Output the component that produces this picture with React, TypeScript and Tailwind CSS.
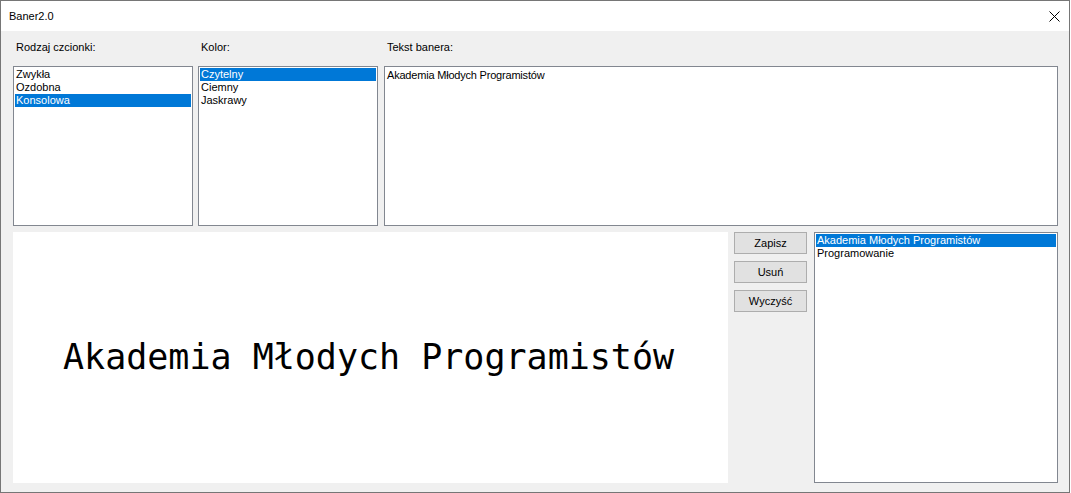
const fontTypes = ['Zwykła', 'Ozdobna', 'Konsolowa'];
const colors = ['Czytelny', 'Ciemny', 'Jaskrawy'];
const saved = ['Akademia Młodych Programistów', 'Programowanie'];

function ListBox({ items, selected, className }: { items: string[]; selected: number; className: string }) {
  return (
    <div className={`bg-white border border-[#828790] p-px ${className}`}>
      {items.map((item, i) => (
        <div
          key={item}
          className={`h-[13px] leading-[13px] pl-px whitespace-nowrap ${
            i === selected ? 'bg-[#0078d7] text-white' : 'text-black'
          }`}
        >
          {item}
        </div>
      ))}
    </div>
  );
}

function WinButton({ label }: { label: string }) {
  return (
    <button className="w-[73px] h-[22px] bg-[#e1e1e1] border border-[#adadad] text-black text-[11px] leading-[13px]">
      {label}
    </button>
  );
}

export default function App() {
  return (
    <div className="w-[1071px] h-[493px] bg-white" style={{ fontFamily: '"Liberation Sans", Arial, sans-serif' }}>
      <div className="w-[1070px] h-[493px] border border-[#767676] flex flex-col">
        {/* title bar */}
        <div className="h-[30px] bg-white flex items-center justify-between pl-[8px] pr-[9px]">
          <span className="text-[11px] text-black">Baner2.0</span>
          <svg width="11" height="11" viewBox="0 0 11 11" className="mt-px">
            <path d="M0.5 0.5 L10.5 10.5 M10.5 0.5 L0.5 10.5" stroke="#000" strokeWidth="1" />
          </svg>
        </div>

        {/* body */}
        <div className="flex-1 bg-[#f0f0f0] pl-[12px] pr-[11px] pt-[10px] text-[11px] leading-[13px] text-black">
          <div className="flex h-[13px]">
            <div className="w-[180px] pl-[3px]">Rodzaj czcionki:</div>
            <div className="w-[180px] ml-[5px] pl-[3px]">Kolor:</div>
            <div className="ml-[6px] pl-[3px]">Tekst banera:</div>
          </div>

          <div className="flex mt-[12px] h-[160px]">
            <ListBox items={fontTypes} selected={2} className="w-[180px] h-full" />
            <ListBox items={colors} selected={0} className="w-[180px] h-full ml-[5px]" />
            <div className="w-[674px] h-full ml-[6px] bg-white border border-[#828790] pl-[2px] pt-[2px] tracking-[-0.2px]">
              Akademia Młodych Programistów
            </div>
          </div>

          <div className="flex mt-[6px] h-[251px]">
            <div className="w-[715px] h-full bg-white flex items-center pl-[50px]">
              <span
                className="text-[35px] leading-none text-black whitespace-nowrap"
                style={{ fontFamily: '"DejaVu Sans Mono", "Liberation Mono", monospace' }}
              >
                Akademia Młodych Programistów
              </span>
            </div>
            <div className="ml-[6px] flex flex-col gap-[7px]">
              <WinButton label="Zapisz" />
              <WinButton label="Usuń" />
              <WinButton label="Wyczyść" />
            </div>
            <ListBox items={saved} selected={0} className="w-[244px] h-full ml-[7px]" />
          </div>
        </div>
      </div>
    </div>
  );
}
